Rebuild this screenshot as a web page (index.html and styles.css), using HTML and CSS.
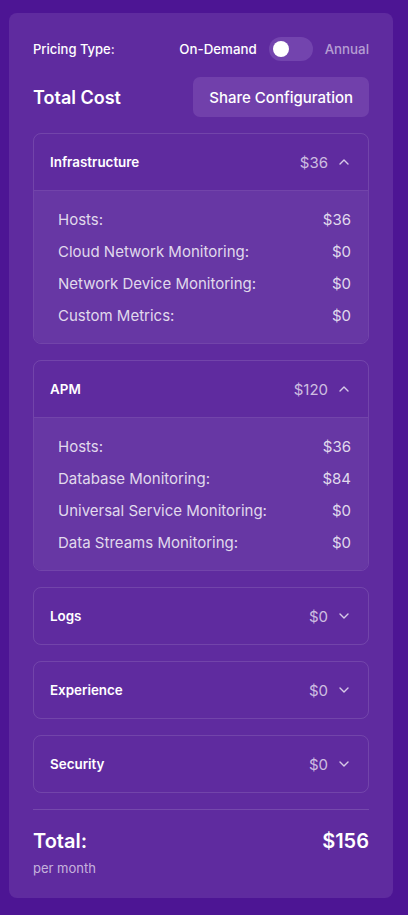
FILE: index.html
```html
<!DOCTYPE html>
<html>
<head>
<meta charset="utf-8">
<link rel="stylesheet" href="styles.css">
</head>
<body>
<div class="card">
  <div class="pricing-row">
    <span class="pricing-label">Pricing Type:</span>
    <div class="toggle-group">
      <span class="opt-active">On-Demand</span>
      <span class="toggle"><span class="knob"></span></span>
      <span class="opt-inactive">Annual</span>
    </div>
  </div>
  <div class="title-row">
    <h2 class="title">Total Cost</h2>
    <button class="share">Share Configuration</button>
  </div>

  <div class="section">
    <div class="sec-head expanded">
      <span class="sec-name">Infrastructure</span>
      <span class="sec-right"><span class="sec-val">$36</span>
        <svg class="chev" viewBox="0 0 16 16"><path d="M4 10l4-4 4 4"/></svg></span>
    </div>
    <div class="sec-body">
      <div class="row"><span>Hosts:</span><span>$36</span></div>
      <div class="row"><span>Cloud Network Monitoring:</span><span>$0</span></div>
      <div class="row"><span>Network Device Monitoring:</span><span>$0</span></div>
      <div class="row"><span>Custom Metrics:</span><span>$0</span></div>
    </div>
  </div>

  <div class="section">
    <div class="sec-head expanded">
      <span class="sec-name">APM</span>
      <span class="sec-right"><span class="sec-val">$120</span>
        <svg class="chev" viewBox="0 0 16 16"><path d="M4 10l4-4 4 4"/></svg></span>
    </div>
    <div class="sec-body">
      <div class="row"><span>Hosts:</span><span>$36</span></div>
      <div class="row"><span>Database Monitoring:</span><span>$84</span></div>
      <div class="row"><span>Universal Service Monitoring:</span><span>$0</span></div>
      <div class="row"><span>Data Streams Monitoring:</span><span>$0</span></div>
    </div>
  </div>

  <div class="section">
    <div class="sec-head">
      <span class="sec-name">Logs</span>
      <span class="sec-right"><span class="sec-val">$0</span>
        <svg class="chev" viewBox="0 0 16 16"><path d="M4 6l4 4 4-4"/></svg></span>
    </div>
  </div>

  <div class="section">
    <div class="sec-head">
      <span class="sec-name">Experience</span>
      <span class="sec-right"><span class="sec-val">$0</span>
        <svg class="chev" viewBox="0 0 16 16"><path d="M4 6l4 4 4-4"/></svg></span>
    </div>
  </div>

  <div class="section">
    <div class="sec-head">
      <span class="sec-name">Security</span>
      <span class="sec-right"><span class="sec-val">$0</span>
        <svg class="chev" viewBox="0 0 16 16"><path d="M4 6l4 4 4-4"/></svg></span>
    </div>
  </div>

  <div class="total">
    <div class="total-row"><span>Total:</span><span>$156</span></div>
    <div class="per">per month</div>
  </div>
</div>
</body>
</html>
```
FILE: styles.css
```css
* { box-sizing: border-box; }
html, body { margin: 0; padding: 0; }
body {
  background: #4d1594;
  font-family: Inter, "Noto Sans", sans-serif;
  color: #fff;
  padding: 13px 15px 17px 9px;
  width: 408px;
  min-height: 915px;
}
.card {
  background: #5f2b9f;
  border-radius: 8px;
  padding: 24px 24px 22px 24px;
  width: 384px;
  height: 885px;
}
.pricing-row {
  display: flex;
  align-items: center;
  justify-content: space-between;
  height: 24px;
}
.pricing-label { font-size: 13px; font-weight: 500; }
.toggle-group { display: flex; align-items: center; gap: 12px; font-size: 13.3px; font-weight: 500; }
.opt-active { color: #fff; }
.opt-inactive { color: rgba(255,255,255,0.55); }
.toggle {
  width: 44px; height: 24px; border-radius: 12px;
  background: #7344ae;
  display: flex; align-items: center; padding: 0 4px;
}
.knob { width: 16px; height: 16px; border-radius: 50%; background: #fff; }
.title-row {
  display: flex; align-items: center; justify-content: space-between;
  margin-top: 16px;
}
.title { margin: 0; font-size: 18px; font-weight: 600; }
.share {
  font-family: inherit;
  background: #7140ab;
  color: #fff;
  border: none;
  border-radius: 7px;
  height: 40px;
  padding: 0 16px;
  font-size: 15px;
  font-weight: 500;
}
.section {
  margin-top: 16px;
  border: 1px solid rgba(255,255,255,0.12);
  border-radius: 8px;
  overflow: hidden;
}
.sec-head {
  height: 56px;
  display: flex; align-items: center; justify-content: space-between;
  padding: 0 16px;
}
.sec-head.expanded { height: 57px; border-bottom: 1px solid rgba(255,255,255,0.12); }
.sec-name { font-size: 13.4px; font-weight: 600; }
.sec-right { display: flex; align-items: center; gap: 8px; }
.sec-val { font-size: 15px; color: rgba(255,255,255,0.7); }
.chev { width: 16px; height: 16px; fill: none; stroke: rgba(255,255,255,0.75); stroke-width: 1.4; stroke-linecap: round; stroke-linejoin: round; }
.sec-body {
  background: #6737a4;
  padding: 12px 17px 12px 24px;
}
.row {
  display: flex; justify-content: space-between; align-items: center;
  height: 32px;
  font-size: 15px;
  color: rgba(255,255,255,0.82);
}
.total {
  margin-top: 16px;
  border-top: 1px solid rgba(255,255,255,0.14);
  padding-top: 16px;
}
.total-row {
  display: flex; justify-content: space-between; align-items: center;
  font-size: 20px; font-weight: 600;
  height: 30px;
}
.per { margin-top: 4px; font-size: 13px; color: rgba(255,255,255,0.65); }
```
